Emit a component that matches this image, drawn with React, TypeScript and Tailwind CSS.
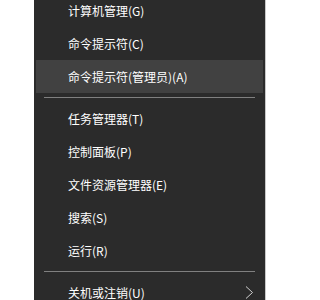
const groups: { label: string; active?: boolean; sub?: boolean }[][] = [
  [
    { label: "计算机管理(G)" },
    { label: "命令提示符(C)" },
    { label: "命令提示符(管理员)(A)", active: true },
  ],
  [
    { label: "任务管理器(T)" },
    { label: "控制面板(P)" },
    { label: "文件资源管理器(E)" },
    { label: "搜索(S)" },
    { label: "运行(R)" },
  ],
  [{ label: "关机或注销(U)", sub: true }],
];

function Chevron() {
  return (
    <svg width="9" height="13" viewBox="0 0 9 13" className="shrink-0">
      <path d="M1 0.5 L7.5 6.5 L1 12.5" fill="none" stroke="#d0d0d0" strokeWidth="1" />
    </svg>
  );
}

export default function App() {
  return (
    <div className="h-[300px] w-[300px] overflow-hidden bg-white">
      <div
        className="ml-[34px] -mt-[6px] w-[232px] border-r border-[#c8c8c8] bg-[#2b2b2b] px-[2px] text-[12px] text-white"
        style={{ fontFamily: '"Noto Sans CJK SC", "Noto Sans", sans-serif' }}
      >
        {groups.map((g, gi) => (
          <div key={gi}>
            {gi > 0 && (
              <div className="py-[4px] px-[8px]">
                <div className="h-px bg-[#808080]" />
              </div>
            )}
            {g.map(item => (
              <div
                key={item.label}
                className={`flex h-[33px] items-center pl-[32px] pr-[9px] ${item.active ? "bg-[#414141]" : ""}`}
              >
                <span className="flex-1 whitespace-nowrap">{item.label}</span>
                {item.sub && <Chevron />}
              </div>
            ))}
          </div>
        ))}
      </div>
    </div>
  );
}
